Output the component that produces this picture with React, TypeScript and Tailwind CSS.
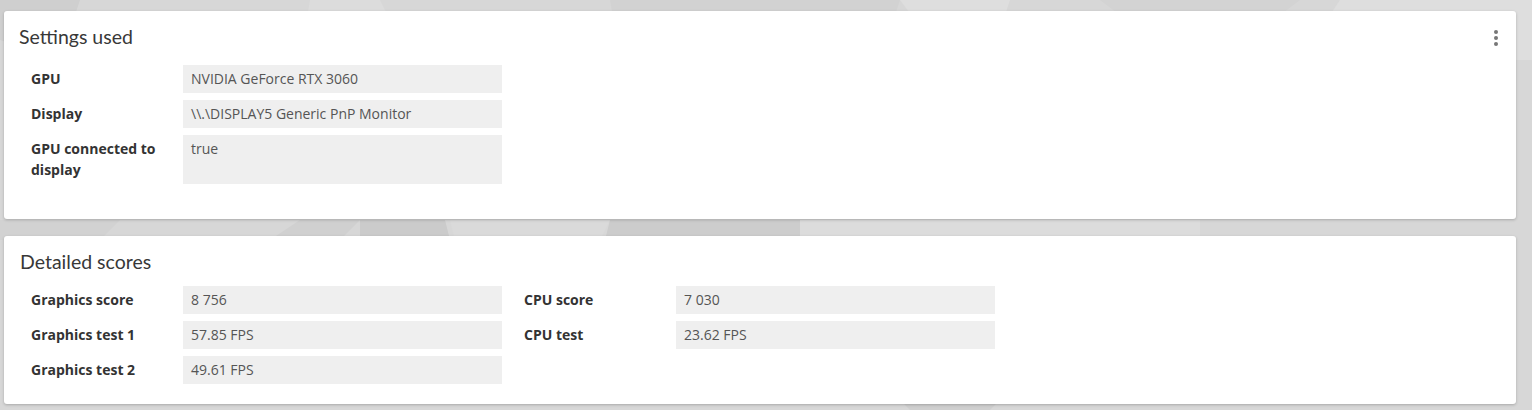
import React from "react";

const Row = ({ label, value, tall }: { label: React.ReactNode; value: string; tall?: boolean }) => (
  <div className="flex w-[471px]">
    <div className="w-[152px] shrink-0 pt-[3px] pb-[4px] pr-3 text-[14px] leading-[21px] font-bold text-[#333]" style={{ fontFamily: '"Open Sans", sans-serif' }}>
      {label}
    </div>
    <div
      className={`w-[319px] shrink-0 bg-[#efefef] px-2 text-[14px] leading-[28px] text-[#555] ${tall ? "" : "h-[28px]"}`}
      style={{ fontFamily: '"Open Sans", sans-serif' }}
    >
      {value}
    </div>
  </div>
);

export default function App() {
  return (
    <div className="relative w-[1532px] h-[410px] overflow-hidden bg-[#d7d7d7]">
      <svg className="absolute inset-0" width="1532" height="410" viewBox="0 0 1532 410">
        <polygon points="0,0 80,0 60,60 0,40" fill="#cfcfcf" />
        <polygon points="310,0 380,0 410,60 300,60" fill="#dcdcdc" />
        <polygon points="610,0 900,0 880,60 620,60" fill="#d2d2d2" />
        <polygon points="900,0 1010,0 1000,30 930,40" fill="#dedede" />
        <polygon points="1340,0 1532,0 1532,60 1300,60" fill="#dedede" />
        <polygon points="300,220 360,220 340,240 270,240" fill="#d0d0d0" />
        <polygon points="360,220 445,220 450,240 360,240" fill="#cbcbcb" />
        <polygon points="450,220 610,220 600,240 455,240" fill="#dadada" />
        <polygon points="610,220 700,220 730,240 605,240" fill="#cccccc" />
        <polygon points="700,220 800,220 800,240 700,240" fill="#cdcdcd" />
        <polygon points="800,220 1200,220 1200,240 800,240" fill="#dcdcdc" />
        <polygon points="0,220 120,220 100,240 0,240" fill="#d2d2d2" />
        <polygon points="1100,0 1300,0 1280,15 1120,15" fill="#d3d3d3" />
        <polygon points="900,400 1000,400 990,410 910,410" fill="#cfcfcf" />
      </svg>
      <div className="relative flex flex-col gap-[17px] pt-[11px] pl-[4px] pr-[16px]">
        <div className="relative h-[208px] rounded-[3px] bg-white shadow-[0_1px_3px_rgba(0,0,0,0.22)] pl-[15px] pt-[13px]">
          <div className="text-[19.5px] leading-[26px] text-[#383838] mb-[15px]" style={{ fontFamily: "Lato, sans-serif" }}>
            Settings used
          </div>
          <div className="absolute right-[18px] top-[19px] flex flex-col gap-[2px]">
            <span className="block w-[4px] h-[4px] rounded-full bg-[#777]" />
            <span className="block w-[4px] h-[4px] rounded-full bg-[#777]" />
            <span className="block w-[4px] h-[4px] rounded-full bg-[#777]" />
          </div>
          <div className="ml-[12px] flex flex-col gap-[7px]">
            <Row label="GPU" value="NVIDIA GeForce RTX 3060" />
            <Row label="Display" value="\\.\DISPLAY5 Generic PnP Monitor" />
            <Row label={<>GPU connected to<br />display</>} value="true" tall />
          </div>
        </div>
        <div className="h-[168px] rounded-[3px] bg-white shadow-[0_1px_3px_rgba(0,0,0,0.22)] pl-[15px] pt-[13px]">
          <div className="text-[19.5px] leading-[26px] text-[#383838] mb-[11px] ml-[1px]" style={{ fontFamily: "Lato, sans-serif" }}>
            Detailed scores
          </div>
          <div className="ml-[12px] flex gap-[22px]">
            <div className="flex flex-col gap-[7px]">
              <Row label="Graphics score" value="8 756" />
              <Row label="Graphics test 1" value="57.85 FPS" />
              <Row label="Graphics test 2" value="49.61 FPS" />
            </div>
            <div className="flex flex-col gap-[7px]">
              <Row label="CPU score" value="7 030" />
              <Row label="CPU test" value="23.62 FPS" />
            </div>
          </div>
        </div>
      </div>
    </div>
  );
}
